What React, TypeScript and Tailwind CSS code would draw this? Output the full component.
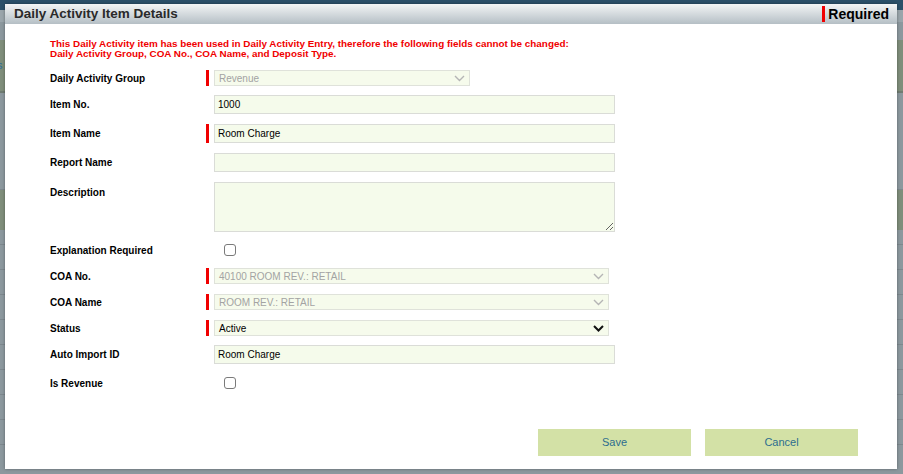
import React from "react";

const font = "font-['Liberation_Sans',Arial,Helvetica,sans-serif]";

function Chevron({ dark }: { dark?: boolean }) {
	return (
		<svg width="11" height="7" viewBox="0 0 11 7" className="shrink-0">
			<polyline
				points="1,1 5.5,5.5 10,1"
				fill="none"
				stroke={dark ? "#111" : "#b5b5b5"}
				strokeWidth={dark ? 2 : 1.4}
			/>
		</svg>
	);
}

function Row({
	label,
	required,
	mt,
	h,
	top,
	children,
}: {
	label: string;
	required?: boolean;
	mt: string;
	h: string;
	top?: boolean;
	children: React.ReactNode;
}) {
	return (
		<div className={`flex ${mt} ${h}`}>
			<div
				className={`w-[156px] text-[10px] font-bold text-black flex ${
					top ? "items-start pt-[3px]" : "items-center"
				}`}
			>
				{label}
			</div>
			<div className="w-[8px] flex">
				{required && <div className="w-[3px] h-full bg-[#f00000]" />}
			</div>
			<div className="flex-1 flex items-center">{children}</div>
		</div>
	);
}

function TextBox({ value, w = "w-[401px]" }: { value?: string; w?: string }) {
	return (
		<div
			className={`${w} h-full bg-[#f5fbeb] border border-[#dadcd7] flex items-center pl-[3px] text-[10px] text-black`}
		>
			{value}
		</div>
	);
}

function SelectBox({
	value,
	w,
	disabled,
}: {
	value: string;
	w: string;
	disabled?: boolean;
}) {
	return (
		<div
			className={`${w} h-full bg-[#f6fbec] border border-[#dfe2da] flex items-center justify-between pl-[4px] pr-[4px] text-[10px] ${
				disabled ? "text-[#a3a3a3]" : "text-black"
			}`}
		>
			<span>{value}</span>
			<Chevron dark={!disabled} />
		</div>
	);
}

function Check() {
	return (
		<div className="ml-[10px] w-[12px] h-[12px] rounded-[3px] border border-[#7a7a7a] bg-white" />
	);
}

function Backdrop() {
	return (
		<div className="flex flex-col w-full h-full">
			<div className="h-[10px] bg-[#2b5069]" />
			<div className="h-[12px] bg-[#9aa5ab]" />
			<div className="h-[18px] bg-[#8c989e]" />
			<div className="h-[53px] bg-[#7f8e7b] border-b-[2px] border-[#6f7c72] flex items-center">
				<span className="text-[11px] text-[#2d6e9b] -ml-[3px]">s</span>
			</div>
			<div className="h-[97px] bg-[#8c989e] border-b border-[#7d888e]" />
			<div className="h-[40px] bg-[#7f8e7b]" />
			<div className="h-[15px] bg-[#8c989e] border-b border-[#7d888e]" />
			<div className="h-[25px] bg-[#8c989e] border-b border-[#7d888e]" />
			<div className="h-[25px] bg-[#8c989e] border-b border-[#7d888e]" />
			<div className="h-[25px] bg-[#8c989e] border-b border-[#7d888e]" />
			<div className="h-[25px] bg-[#8c989e] border-b border-[#7d888e]" />
			<div className="h-[25px] bg-[#8c989e] border-b border-[#7d888e]" />
			<div className="h-[25px] bg-[#8c989e] border-b border-[#7d888e]" />
			<div className="h-[25px] bg-[#8c989e] border-b border-[#7d888e]" />
			<div className="h-[25px] bg-[#8c989e] border-b border-[#7d888e]" />
			<div className="flex-1 bg-[#8c989e]" />
		</div>
	);
}

export default function App() {
	return (
		<div className={`relative w-[903px] h-[474px] overflow-hidden ${font}`}>
			<Backdrop />
			<div className="absolute left-[5px] top-[4px] w-[892px] h-[465px] bg-white flex flex-col shadow-[0_0_3px_rgba(0,0,0,0.35)]">
				<div className="h-[20px] flex items-center justify-between bg-gradient-to-b from-[#f3f5f6] to-[#b5bfc5] pl-[9px] pr-[8px]">
					<span className="text-[13.5px] font-bold text-[#2a2a2a]">
						Daily Activity Item Details
					</span>
					<div className="flex items-center h-full py-[2px]">
						<div className="w-[3px] h-full bg-[#f00000] mr-[3px]" />
						<span className="text-[14px] font-bold text-black">Required</span>
					</div>
				</div>

				<div className="flex flex-col pl-[45px]">
					<div className="mt-[15px] text-[9.9px] leading-[10px] font-bold text-[#f00000]">
						<div>
							This Daily Activity item has been used in Daily Activity Entry,
							therefore the following fields cannot be changed:
						</div>
						<div>
							Daily Activity Group, COA No., COA Name, and Deposit Type.
						</div>
					</div>

					<Row label="Daily Activity Group" required mt="mt-[11px]" h="h-[16px]">
						<SelectBox value="Revenue" w="w-[256px]" disabled />
					</Row>
					<Row label="Item No." mt="mt-[9px]" h="h-[19px]">
						<TextBox value="1000" />
					</Row>
					<Row label="Item Name" required mt="mt-[10px]" h="h-[19px]">
						<TextBox value="Room Charge" />
					</Row>
					<Row label="Report Name" mt="mt-[10px]" h="h-[19px]">
						<TextBox />
					</Row>
					<Row label="Description" mt="mt-[10px]" h="h-[50px]" top>
						<textarea
							readOnly
							className="w-[401px] h-full bg-[#f5fbeb] border border-[#dadcd7] outline-none"
						/>
					</Row>
					<Row label="Explanation Required" mt="mt-[9px]" h="h-[18px]">
						<Check />
					</Row>
					<Row label="COA No." required mt="mt-[9px]" h="h-[16px]">
						<SelectBox value="40100 ROOM REV.: RETAIL" w="w-[395px]" disabled />
					</Row>
					<Row label="COA Name" required mt="mt-[10px]" h="h-[16px]">
						<SelectBox value="ROOM REV.: RETAIL" w="w-[395px]" disabled />
					</Row>
					<Row label="Status" required mt="mt-[10px]" h="h-[16px]">
						<SelectBox value="Active" w="w-[395px]" />
					</Row>
					<Row label="Auto Import ID" mt="mt-[9px]" h="h-[19px]">
						<TextBox value="Room Charge" />
					</Row>
					<Row label="Is Revenue" mt="mt-[10px]" h="h-[18px]">
						<Check />
					</Row>
				</div>

				<div className="flex justify-end gap-[14px] pr-[39px] mt-[37px]">
					<button className="w-[153px] h-[27px] bg-[#d3e1a6] text-[11px] text-[#2c6d8f]">
						Save
					</button>
					<button className="w-[153px] h-[27px] bg-[#d3e1a6] text-[11px] text-[#2c6d8f]">
						Cancel
					</button>
				</div>
			</div>
		</div>
	);
}
